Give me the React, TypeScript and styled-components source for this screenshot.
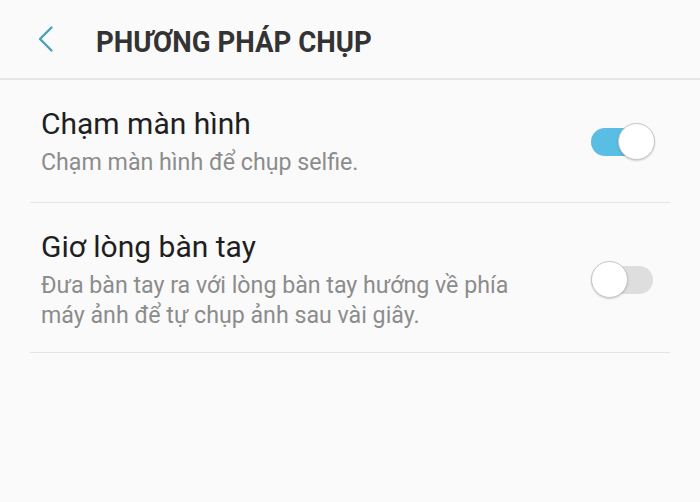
import React, { useState } from "react";
import styled, { createGlobalStyle } from "styled-components";

const Global = createGlobalStyle`
  html, body { margin: 0; padding: 0; background: #fafafa; }
  body { font-family: Roboto, "Noto Sans", sans-serif; -webkit-font-smoothing: antialiased; }
`;

const Page = styled.div`
  width: 700px;
  height: 502px;
  background: #fafafa;
  display: flex;
  flex-direction: column;
`;

const Header = styled.header`
  height: 80px;
  display: flex;
  align-items: center;
  border-bottom: 2px solid #e6e6e6;
  box-sizing: border-box;
  flex-shrink: 0;
`;

const BackButton = styled.button`
  width: 96px;
  height: 80px;
  padding: 0 0 0 36px;
  border: 0;
  background: transparent;
  display: flex;
  align-items: center;
  cursor: pointer;
`;

const Title = styled.h1`
  margin: 0;
  font-family: Roboto, sans-serif;
  font-weight: 700;
  font-size: 30px;
  color: #333333;
  transform: scaleX(0.92);
  transform-origin: left center;
  white-space: nowrap;
  margin-top: 4px;
`;

const List = styled.div`
  display: flex;
  flex-direction: column;
  padding: 0 30px;
`;

const Row = styled.div<{ $pb: number }>`
  display: flex;
  align-items: center;
  border-bottom: 1px solid #e3e3e3;
  padding: 27px 15px ${(p) => p.$pb}px 11px;
`;

const TextCol = styled.div`
  flex: 1;
  min-width: 0;
  display: flex;
  flex-direction: column;
  gap: 6px;
  max-width: 500px;
`;

const RowTitle = styled.div`
  font-size: 30px;
  line-height: 34px;
  color: #1f1f1f;
`;

const RowSub = styled.div`
  font-size: 23.2px;
  line-height: 30px;
  color: #8c8c8c;
`;

const ToggleWrap = styled.button`
  margin-left: auto;
  border: 0;
  padding: 0;
  background: transparent;
  position: relative;
  width: 64px;
  height: 38px;
  cursor: pointer;
  flex-shrink: 0;
`;

const Track = styled.span<{ $on: boolean }>`
  position: absolute;
  left: 0;
  right: 2px;
  top: 5px;
  height: 28px;
  border-radius: 14px;
  background: ${(p) => (p.$on ? "#5abde3" : "#dedede")};
`;

const Thumb = styled.span<{ $on: boolean }>`
  position: absolute;
  top: 0;
  left: ${(p) => (p.$on ? "27px" : "0px")};
  width: 37px;
  height: 37px;
  box-sizing: border-box;
  border-radius: 50%;
  background: #ffffff;
  border: 1.5px solid #c6c6c6;
  box-shadow: 0 1px 2px rgba(0, 0, 0, 0.18);
`;

function Toggle({ on, onClick }: { on: boolean; onClick: () => void }) {
  return (
    <ToggleWrap onClick={onClick} aria-pressed={on}>
      <Track $on={on} />
      <Thumb $on={on} />
    </ToggleWrap>
  );
}

export default function App() {
  const [a, setA] = useState(true);
  const [b, setB] = useState(false);
  return (
    <Page>
      <Global />
      <Header>
        <BackButton aria-label="Back">
          <svg width="20" height="28" viewBox="0 0 20 28" fill="none">
            <path d="M15.5 2.5 L4 14 L15.5 25.5" stroke="#4a9fb8" strokeWidth="2.4" strokeLinecap="round" strokeLinejoin="round" />
          </svg>
        </BackButton>
        <Title>PHƯƠNG PHÁP CHỤP</Title>
      </Header>
      <List>
        <Row $pb={25}>
          <TextCol>
            <RowTitle>Chạm màn hình</RowTitle>
            <RowSub>Chạm màn hình để chụp selfie.</RowSub>
          </TextCol>
          <Toggle on={a} onClick={() => setA(!a)} />
        </Row>
        <Row $pb={22}>
          <TextCol>
            <RowTitle>Giơ lòng bàn tay</RowTitle>
            <RowSub>Đưa bàn tay ra với lòng bàn tay hướng về phía máy ảnh để tự chụp ảnh sau vài giây.</RowSub>
          </TextCol>
          <Toggle on={b} onClick={() => setB(!b)} />
        </Row>
      </List>
    </Page>
  );
}
